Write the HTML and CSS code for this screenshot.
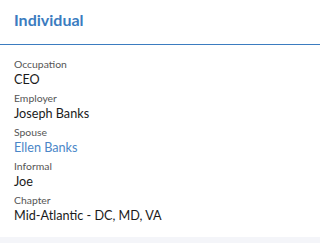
FILE: index.html
```html
<!DOCTYPE html>
<html>
<head>
<meta charset="utf-8">
<link rel="stylesheet" href="styles.css">
</head>
<body>
<div class="card">
  <div class="card-header">
    <h2 class="title">Individual</h2>
  </div>
  <div class="card-body">
    <div class="field">
      <div class="label">Occupation</div>
      <div class="value">CEO</div>
    </div>
    <div class="field">
      <div class="label">Employer</div>
      <div class="value">Joseph Banks</div>
    </div>
    <div class="field">
      <div class="label">Spouse</div>
      <div class="value link">Ellen Banks</div>
    </div>
    <div class="field">
      <div class="label">Informal</div>
      <div class="value">Joe</div>
    </div>
    <div class="field">
      <div class="label">Chapter</div>
      <div class="value">Mid-Atlantic - DC, MD, VA</div>
    </div>
  </div>
</div>
<div class="footer-band"></div>
</body>
</html>
```

FILE: styles.css
```css
html, body {
  margin: 0;
  padding: 0;
  background: #ffffff;
  font-family: Lato, "Open Sans", sans-serif;
}
.card {
  background: #ffffff;
}
.card-header {
  padding: 11px 14px 15px;
  border-bottom: 1px solid #3b7cc0;
}
.title {
  margin: 0;
  font-size: 16px;
  line-height: 18px;
  font-weight: 700;
  color: #3b7cc0;
}
.card-body {
  padding: 13px 14px 13px;
  display: flex;
  flex-direction: column;
  gap: 4px;
}
.field {
  display: flex;
  flex-direction: column;
  gap: 1px;
}
.label {
  font-size: 10.4px;
  line-height: 13px;
  color: #555555;
}
.value {
  font-size: 12.65px;
  line-height: 16px;
  color: #1a1a1a;
}
.value.link {
  color: #4a86c8;
}
.footer-band {
  height: 6px;
  background: #f4f5f9;
}
```
